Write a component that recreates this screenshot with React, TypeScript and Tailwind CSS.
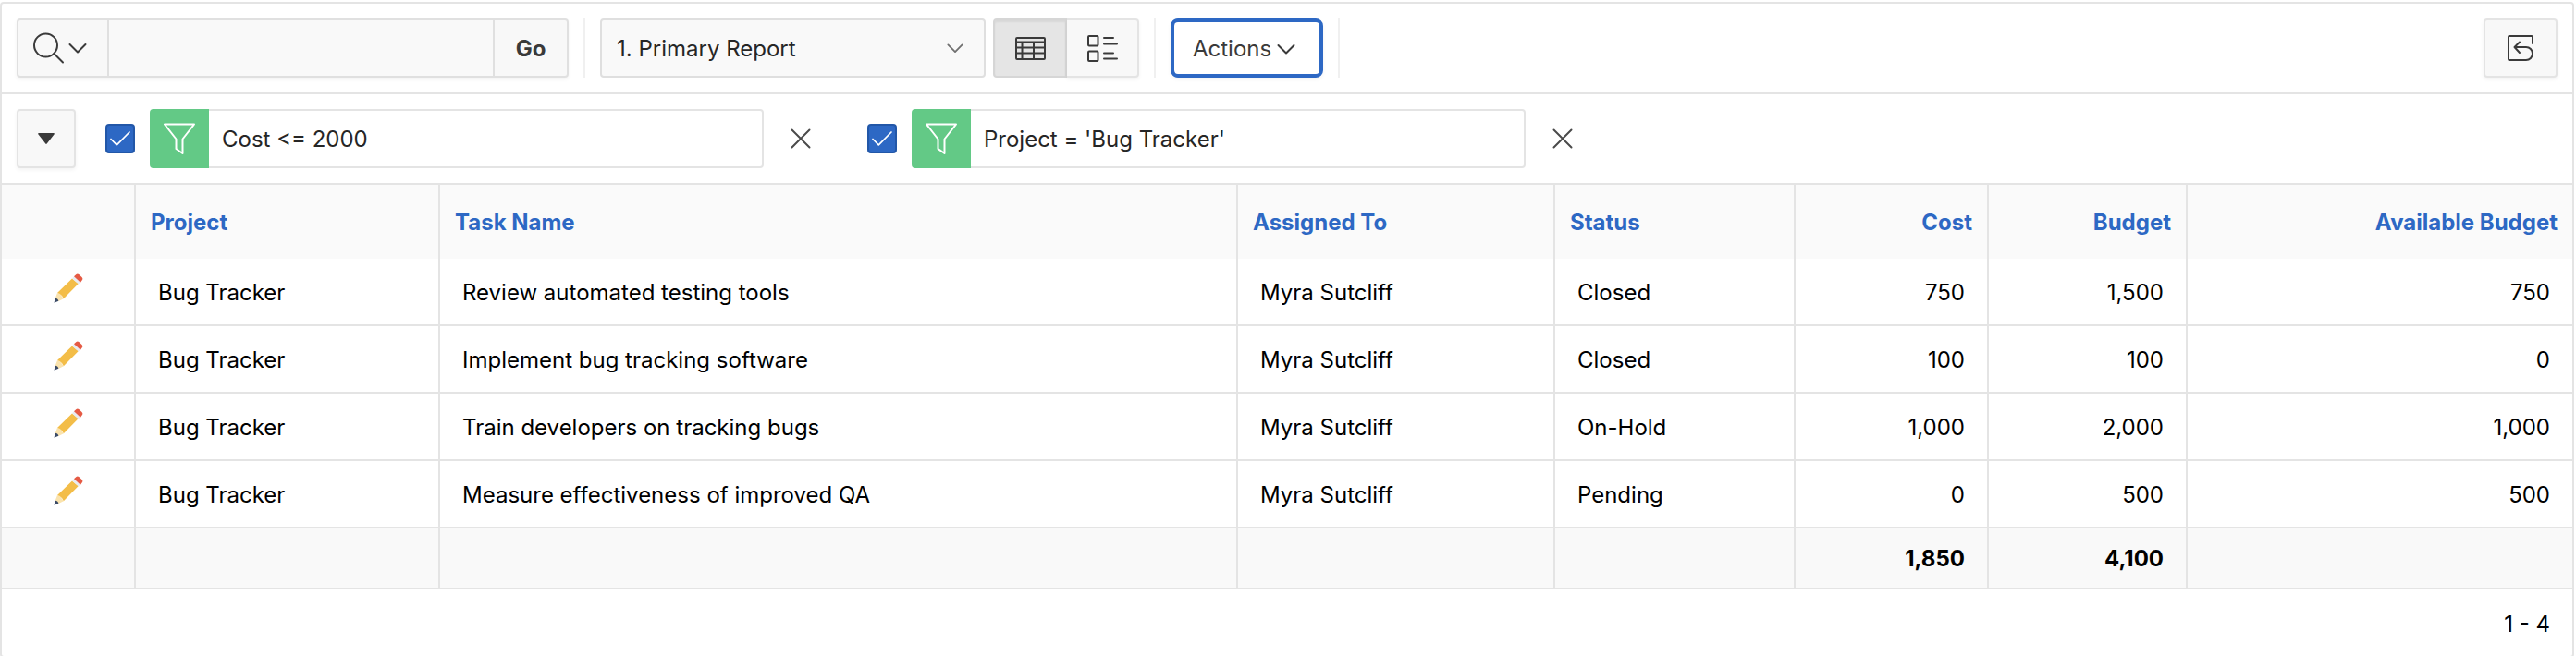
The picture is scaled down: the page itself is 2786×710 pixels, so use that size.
import { useState } from "react";

type Task = {
  project: string;
  name: string;
  assignee: string;
  status: string;
  cost: string;
  budget: string;
  available: string;
};

const tasks: Task[] = [
  { project: "Bug Tracker", name: "Review automated testing tools", assignee: "Myra Sutcliff", status: "Closed", cost: "750", budget: "1,500", available: "750" },
  { project: "Bug Tracker", name: "Implement bug tracking software", assignee: "Myra Sutcliff", status: "Closed", cost: "100", budget: "100", available: "0" },
  { project: "Bug Tracker", name: "Train developers on tracking bugs", assignee: "Myra Sutcliff", status: "On-Hold", cost: "1,000", budget: "2,000", available: "1,000" },
  { project: "Bug Tracker", name: "Measure effectiveness of improved QA", assignee: "Myra Sutcliff", status: "Pending", cost: "0", budget: "500", available: "500" },
];

const columns = [
  { label: "Project", numeric: false },
  { label: "Task Name", numeric: false },
  { label: "Assigned To", numeric: false },
  { label: "Status", numeric: false },
  { label: "Cost", numeric: true },
  { label: "Budget", numeric: true },
  { label: "Available Budget", numeric: true },
];

function Chevron({ className }: { className: string }) {
  return (
    <svg viewBox="0 0 20 12" fill="none" stroke="currentColor" strokeWidth="2" strokeLinecap="round" strokeLinejoin="round" className={className} aria-hidden="true">
      <path d="M1.500 2 10 10.500l8.500-8.500" />
    </svg>
  );
}

function SearchIcon() {
  return (
    <svg viewBox="0 0 34 34" fill="none" stroke="currentColor" strokeWidth="2" strokeLinecap="round" className="size-[34px]" aria-hidden="true">
      <circle cx="13.500" cy="14" r="12.500" />
      <path d="m22.500 23 9.500 9.500" />
    </svg>
  );
}

function GridIcon() {
  return (
    <svg viewBox="0 0 34 34" fill="none" stroke="currentColor" strokeWidth="2" className="size-[34px] shrink-0" aria-hidden="true">
      <rect x="2" y="6" width="31" height="23" rx="1" />
      <path d="M2 10.500h31M2 16.500h31M2 22.500h31M8.500 10.500V29M21 10.500V29" />
    </svg>
  );
}

function DetailIcon() {
  return (
    <svg viewBox="0 0 34 34" fill="none" stroke="currentColor" strokeWidth="2" strokeLinecap="round" className="size-[34px] shrink-0" aria-hidden="true">
      <rect x="2" y="4" width="10.500" height="10.500" rx="1" />
      <rect x="2" y="20.500" width="10.500" height="10.500" rx="1" />
      <path d="M19 6h10M19 12.500h14M19 22.500h10M19 28.500h14" />
    </svg>
  );
}

function ResetIcon() {
  return (
    <svg viewBox="0 0 28 28" fill="none" stroke="currentColor" strokeWidth="2" strokeLinecap="round" strokeLinejoin="round" className="size-7" aria-hidden="true">
      <path d="M27 9V2a1 1 0 0 0-1-1H2a1 1 0 0 0-1 1v24a1 1 0 0 0 1 1h18a7 7 0 0 0 0-14H7.500M13 7.500 7.500 13l5.500 6" />
    </svg>
  );
}

function FunnelIcon() {
  return (
    <svg viewBox="0 0 34 34" fill="none" stroke="currentColor" strokeWidth="2" strokeLinejoin="round" className="size-[34px]" aria-hidden="true">
      <path d="M1 1.500h32L20.500 17.500V33l-7-5V17.500Z" />
    </svg>
  );
}

function CloseIcon() {
  return (
    <svg viewBox="0 0 22 22" fill="none" stroke="currentColor" strokeWidth="2" strokeLinecap="round" className="size-[22px]" aria-hidden="true">
      <path d="m1.500 1.500 19 19M20.500 1.500l-19 19" />
    </svg>
  );
}

function PencilIcon() {
  return (
    <svg viewBox="0 0 32 32" className="size-8" aria-hidden="true">
      <path d="M20 5.500 26.800 11 10.800 27.300 9 24 6.500 22.500 4 21Z" fill="#f3bd48" />
      <path d="m4 21 3 1 1.800 2.500 2 2.800L5.200 30 1.700 27Z" fill="#fae3ae" />
      <path d="M1.800 26.700c1.700 0 3 1.200 3.600 3L.500 31.700Z" fill="#3a4a66" />
      <path d="m20 5.500 2-2.300 7 6.300-2.200 2Z" fill="#e8ebf0" />
      <path d="m22 3.300 2.500-2.400q1.500-1 3 .300l3 2.800q1.500 1.500.500 3L29 9.700Z" fill="#e55a44" />
    </svg>
  );
}

function Filter({ id, text }: { id: string; text: string }) {
  const [on, setOn] = useState(true);
  return (
    <div className="flex items-center">
      <input
        id={id}
        type="checkbox"
        aria-label={"Enable filter " + text}
        checked={on}
        onChange={() => setOn(!on)}
        className="peer sr-only"
      />
      <label htmlFor={id} className="flex size-8 items-center justify-center rounded border-2 border-[#2257a8] bg-[#2d68c4] text-white">
        {on && (
          <svg viewBox="0 0 22 16" fill="none" stroke="currentColor" strokeWidth="1.700" strokeLinecap="round" strokeLinejoin="round" className="h-4 w-[22px] shrink-0" aria-hidden="true">
            <path d="m1 8.500 6.300 6.300L21 1" />
          </svg>
        )}
      </label>
      <div className="ml-4 flex h-16 w-[664px]">
        <span className="flex w-16 shrink-0 items-center justify-center rounded-l bg-[#63c986] text-white">
          <FunnelIcon />
        </span>
        <button type="button" className="flex grow items-center rounded-r border-y-2 border-r-2 border-[#e4e4e4] bg-white px-[14px] pt-[2px] text-left text-[#262626]">
          {text}
        </button>
      </div>
      <button type="button" aria-label={"Remove filter " + text} className="flex h-16 w-20 items-center justify-center text-[#4a4a4a]">
        <CloseIcon />
      </button>
    </div>
  );
}

function Divider() {
  return <div className="h-16 w-[2px] shrink-0 bg-[#f0f0f0]" />;
}

export default function App() {
  return (
    <div className="min-h-screen bg-white pt-[2px] pr-[2px] font-['Inter',sans-serif] text-[24px] leading-8 text-black">
      <div className="rounded border-2 border-[#e4e4e4] bg-white">
        <div className="flex items-center border-b-2 border-[#e4e4e4] p-4 text-[#3a3a3a]">
          <div className="flex h-16 w-[597px] rounded border-2 border-[#e0e0e0] bg-[#f8f8f8] shadow-[0_2px_4px_rgba(0,0,0,0.05)]">
            <button type="button" aria-label="Select columns to search" className="flex w-[98px] shrink-0 items-center gap-1 border-r-2 border-[#e0e0e0] pl-4">
              <SearchIcon />
              <Chevron className="h-3 w-5" />
            </button>
            <input type="text" aria-label="Search" className="min-w-0 grow bg-[#f9f9f9] px-4 outline-none" />
            <button type="button" className="w-20 shrink-0 border-l-2 border-[#e0e0e0] pt-[2px] font-bold">Go</button>
          </div>
          <div className="mr-4 ml-4">
            <Divider />
          </div>
          <div className="grid w-[417px] items-center">
            <select aria-label="Reports" className="col-start-1 row-start-1 h-16 w-full appearance-none rounded border-2 border-[#dfdfdf] bg-[#f9f9f9] px-4 pt-[2px] text-[#262626]">
              <option>1. Primary Report</option>
            </select>
            <div className="pointer-events-none col-start-1 row-start-1 mr-6 justify-self-end text-[#707070]">
              <Chevron className="h-3 w-[18px]" />
            </div>
          </div>
          <div className="ml-2 flex h-16">
            <button type="button" aria-label="View report" className="flex w-20 items-center justify-center rounded-l border-2 border-[#d6d6d6] bg-[#e5e5e5] shadow-[inset_0_2px_2px_rgba(0,0,0,0.06)]">
              <GridIcon />
            </button>
            <button type="button" aria-label="View detail" className="flex w-[78px] items-center justify-center rounded-r border-y-2 border-r-2 border-[#e4e4e4] bg-[#f8f8f8] shadow-[0_2px_4px_rgba(0,0,0,0.05)]">
              <DetailIcon />
            </button>
          </div>
          <div className="mr-4 ml-4">
            <Divider />
          </div>
          <button type="button" className="flex h-16 items-center gap-1.5 rounded-lg border-4 border-[#2d68c4] bg-white pt-[2px] pr-[26px] pl-5 shadow-[0_2px_4px_rgba(0,0,0,0.05)]">
            Actions
            <Chevron className="h-3 w-5" />
          </button>
          <div className="ml-4">
            <Divider />
          </div>
          <button type="button" aria-label="Reset" className="ml-auto flex h-16 w-20 items-center justify-center rounded border-2 border-[#e4e4e4] bg-[#f8f8f8] shadow-[0_2px_4px_rgba(0,0,0,0.05)]">
            <ResetIcon />
          </button>
        </div>

        <div className="flex items-center gap-8 border-b-2 border-[#e4e4e4] p-4">
          <button type="button" aria-label="Collapse report settings" className="flex size-16 items-center justify-center rounded border-2 border-[#e4e4e4] bg-[#f8f8f8] text-[#3a3a3a] shadow-[0_2px_4px_rgba(0,0,0,0.05)]">
            <svg viewBox="0 0 18 12" fill="currentColor" className="h-3 w-[18px]" aria-hidden="true">
              <path d="M1 0h16a.8.8 0 0 1 .7 1.300L9.700 11.500a.9.9 0 0 1-1.400 0L.3 1.300A.8.8 0 0 1 1 0Z" />
            </svg>
          </button>
          <Filter id="filter-cost" text="Cost <= 2000" />
          <Filter id="filter-project" text="Project = 'Bug Tracker'" />
        </div>

        <table className="w-full table-fixed border-separate border-spacing-0">
          <colgroup>
            <col className="w-[145px]" />
            <col className="w-[329px]" />
            <col />
            <col className="w-[343px]" />
            <col className="w-[260px]" />
            <col className="w-[209px]" />
            <col className="w-[215px]" />
            <col className="w-[416px]" />
          </colgroup>
          <thead className="bg-[#fafafa] text-[#2d68c4]">
            <tr className="h-20 [&>*]:pt-[2px] [&>*:not(:last-child)]:border-r-2 [&>*]:border-[#e4e4e4]">
              <td />
              {columns.map((c) => (
                <th key={c.label} scope="col" className={c.numeric ? "px-4 text-right font-bold" : "px-4 text-left font-bold"}>
                  <a href="#sort">{c.label}</a>
                </th>
              ))}
            </tr>
          </thead>
          <tbody>
            {tasks.map((t) => (
              <tr key={t.name} className="h-[73px] [&>*]:pt-[2px] [&>*:not(:last-child)]:border-r-2 [&>*]:border-b-2 [&>*]:border-[#e4e4e4] [&>*]:px-6">
                <td>
                  <a href="#edit" aria-label={"Edit " + t.name} className="flex justify-center pb-2.5">
                    <PencilIcon />
                  </a>
                </td>
                <td>{t.project}</td>
                <td>{t.name}</td>
                <td>{t.assignee}</td>
                <td>{t.status}</td>
                <td className="text-right">{t.cost}</td>
                <td className="text-right">{t.budget}</td>
                <td className="text-right">{t.available}</td>
              </tr>
            ))}
          </tbody>
          <tfoot className="bg-[#f9f9f9] font-bold">
            <tr className="h-[66px] [&>*]:pt-[2px] [&>*:not(:last-child)]:border-r-2 [&>*]:border-b-2 [&>*]:border-[#e4e4e4] [&>*]:px-6">
              <td />
              <td />
              <td />
              <td />
              <td />
              <td className="text-right">1,850</td>
              <td className="text-right">4,100</td>
              <td />
            </tr>
          </tfoot>
        </table>

        <div className="px-6 pt-[22px] pb-[18px] text-right">1 - 4</div>
      </div>
    </div>
  );
}
